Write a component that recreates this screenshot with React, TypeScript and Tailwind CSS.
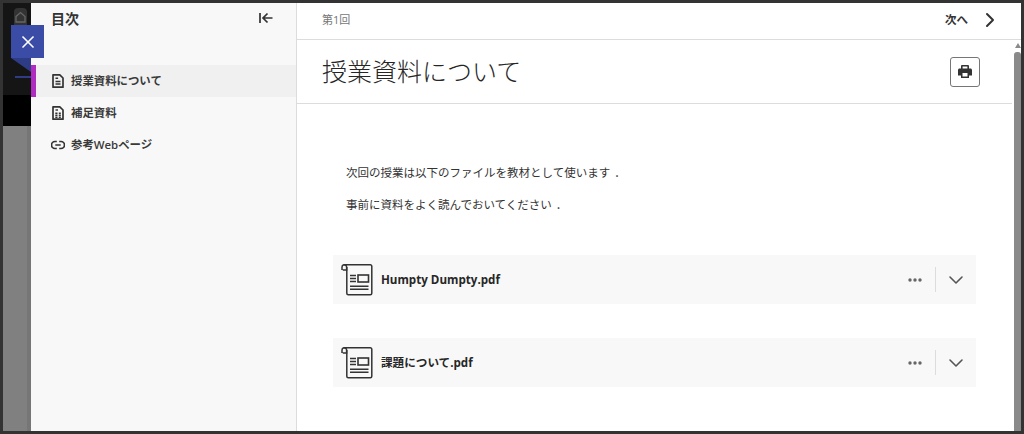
import React from "react";
import { ChevronRight, ChevronDown, X } from "lucide-react";

const sans = "font-['Open_Sans','Noto_Sans_CJK_JP',sans-serif]";

function Doc({ grid }: { grid?: boolean }) {
  return (
    <svg width="14" height="16" viewBox="0 0 14 16" fill="none" stroke="#333" strokeWidth="1.7" className="shrink-0">
      <path d="M2 1.8h6.8l3.2 3.2v9.2H2z" strokeLinejoin="round" />
      {grid ? (
        <>
          <path d="M4.500 5h2.500" strokeWidth="1.400" />
          <path d="M4.300 8.200h2.200M7.800 8.200h2M4.300 10.300h2.200M7.800 10.300h2M4.300 12.300h2.200M7.800 12.300h2" strokeWidth="1.500" />
        </>
      ) : (
        <path d="M4.500 5.200h2.600M4.500 8.500h5M4.500 11h5" strokeWidth="1.500" />
      )}
    </svg>
  );
}

function LinkIcon() {
  return (
    <svg width="14" height="10" viewBox="0 0 14 10" fill="none" stroke="#333" strokeWidth="1.7" className="shrink-0">
      <path d="M5.800 1.500H4a3.300 3.300 0 0 0 0 7h1.800M8.200 1.500H10a3.300 3.300 0 0 1 0 7H8.200M4.300 5h5.400" />
    </svg>
  );
}

function PrintIcon() {
  return (
    <svg width="16" height="16" viewBox="0 0 16 16" className="shrink-0">
      <path d="M4 5V2.200C4 1.500 4.500 1 5.200 1h5.600c.7 0 1.200.5 1.200 1.200V5h-1.600V2.600H5.600V5z" fill="#333" />
      <path fillRule="evenodd" d="M2.600 4.600h10.800c.9 0 1.600.7 1.600 1.600v5.300h-3V14H4v-2.500H1V6.200c0-.9.7-1.600 1.600-1.600zM5.500 9v3.500h5V9z" fill="#333" />
    </svg>
  );
}

function FileIcon() {
  return (
    <svg width="32" height="32" viewBox="0 0 32 32" fill="none" stroke="#333" strokeWidth="1.5" className="shrink-0">
      <path d="M1 6V3a2.300 2.300 0 0 1 4.600 0v3H1.800" />
      <path d="M3 .8h26.300a1.500 1.500 0 0 1 1.500 1.500v27a1.500 1.500 0 0 1-1.500 1.500H7.300a1.500 1.500 0 0 1-1.500-1.500V3" />
      <path d="M9 11.500h6M9 14.500h6M9 17.500h6M9 22.300h18.500M9 25.300h18.500" />
      <rect x="17" y="11" width="10.500" height="7" strokeWidth="1.600" />
    </svg>
  );
}

function NavRow({ icon, label, active }: { icon: React.ReactNode; label: string; active?: boolean }) {
  return (
    <div className={`flex h-[32px] items-center text-[11.4px] font-semibold text-[#3a3a3a] ${active ? "border-l-[5px] border-[#b02cc0] bg-[#f0f0f0]" : "border-l-[5px] border-transparent"}`}>
      <div className="flex w-[35px] shrink-0 justify-start pl-[15px]">{icon}</div>
      <span>{label}</span>
    </div>
  );
}

function FileRow({ name }: { name: string }) {
  return (
    <div className="flex h-[49px] items-center bg-[#f8f8f8] pl-[8px] pr-[8px]">
      <FileIcon />
      <span className="ml-[8px] flex-1 text-[11.6px] font-bold text-[#262626]">{name}</span>
      <svg width="14" height="6" viewBox="0 0 14 6" fill="#666" className="shrink-0">
        <circle cx="2" cy="3" r="1.700" />
        <circle cx="7" cy="3" r="1.700" />
        <circle cx="12" cy="3" r="1.700" />
      </svg>
      <div className="ml-[13px] mr-[8px] h-[25px] w-px bg-[#dcdcdc]" />
      <ChevronDown size={24} strokeWidth={1.6} className="text-[#555]" />
    </div>
  );
}

export default function App() {
  return (
    <div className={`relative flex h-[434px] w-[1024px] overflow-hidden border-[3px] border-[#333] bg-[#808080] ${sans}`}>
      <div className="flex w-[28px] shrink-0 flex-col">
        <div className="relative h-[92px] shrink-0 bg-[#151515]">
          <div className="ml-[11px] mt-[5px] flex h-[17px] w-[13px] items-start justify-center rounded-t-[4px] bg-[#333] pt-[3px]">
            <svg width="11" height="12" viewBox="0 0 11 12" fill="none" stroke="#666" strokeWidth="1.300">
              <path d="M1 5.500 5.500 1.500 10 5.500V11H1z" />
            </svg>
          </div>
          <div className="absolute bottom-[17px] left-[12px] h-[2px] w-[16px] bg-[#2e3c85]" />
        </div>
        <div className="h-[31px] shrink-0 bg-black" />
        <div className="flex flex-1">
          <div className="flex-1 bg-[#808080]" />
          <div className="w-[4px] bg-[#767676]" />
        </div>
      </div>

      <div className="absolute left-[8px] top-[22px] z-10">
        <div className="flex h-[33px] w-[33px] items-center justify-center bg-[#3a4ca6] text-white">
          <X size={20} strokeWidth={2} />
        </div>
        <div className="h-0 w-0 border-l-[20px] border-t-[14px] border-l-transparent border-t-[#2e3c85]" />
      </div>

      <aside className="flex w-[266px] shrink-0 flex-col border-r border-[#dcdcdc] bg-[#f8f8f8]">
        <div className="flex h-[62px] shrink-0 items-start justify-between pl-[20px] pr-[23px] pt-[6px]">
          <span className="text-[14px] font-bold leading-[20px] text-[#333]">目次</span>
          <svg width="14" height="12" viewBox="0 0 14 12" fill="none" stroke="#333" strokeWidth="1.700" className="mt-[3px]">
            <path d="M1 1v10M13.500 6H4.500M8.500 1.500 4 6l4.500 4.500" />
          </svg>
        </div>
        <NavRow active icon={<Doc />} label="授業資料について" />
        <NavRow icon={<Doc grid />} label="補足資料" />
        <NavRow icon={<LinkIcon />} label="参考Webページ" />
      </aside>

      <main className="flex min-w-0 flex-1 flex-col bg-white">
        <div className="flex h-[37px] shrink-0 items-center justify-between border-b border-[#dcdcdc] pb-[2px] pl-[25px] pr-[19px]">
          <span className="text-[11px] text-[#767676]">第1回</span>
          <div className="flex items-center gap-[10px]">
            <span className="text-[11.5px] font-semibold text-[#333]">次へ</span>
            <ChevronRight size={24} strokeWidth={2} className="text-[#333]" />
          </div>
        </div>
        <div className="flex min-h-0 flex-1">
          <div className="min-w-0 flex-1">
            <div className="flex h-[64px] items-center justify-between border-b border-[#dcdcdc] pl-[25px] pr-[32px]">
              <h1 className="pt-[2px] font-['Liberation_Serif','Noto_Sans_CJK_JP',serif] text-[25px] font-light text-[#262626]">授業資料について</h1>
              <div className="flex h-[30px] w-[30px] items-center justify-center rounded-[3px] border border-[#767676]">
                <PrintIcon />
              </div>
            </div>
            <div className="pl-[36px] pr-[36px] pt-[59px]">
              <div className="pl-[13px] text-[11.5px] leading-[20px] text-[#333]">
                <p>次回の授業は以下のファイルを教材として使います<span className="ml-[4px]">．</span></p>
                <p className="mt-[12px]">事前に資料をよく読んでおいてください<span className="ml-[4px]">．</span></p>
              </div>
              <div className="mt-[40px] flex flex-col gap-[34px]">
                <FileRow name="Humpty Dumpty.pdf" />
                <FileRow name="課題について.pdf" />
              </div>
            </div>
          </div>
          <div className="flex w-[9px] shrink-0 flex-col items-end bg-white pt-[3px]">
            <div className="h-0 w-0 border-x-[3.5px] border-b-[5px] border-x-transparent border-b-[#8a8a8a]" />
            <div className="mt-[4px] w-[7px] flex-1 rounded-t-[3px] bg-[#8a8a8a]" />
          </div>
        </div>
      </main>
    </div>
  );
}
